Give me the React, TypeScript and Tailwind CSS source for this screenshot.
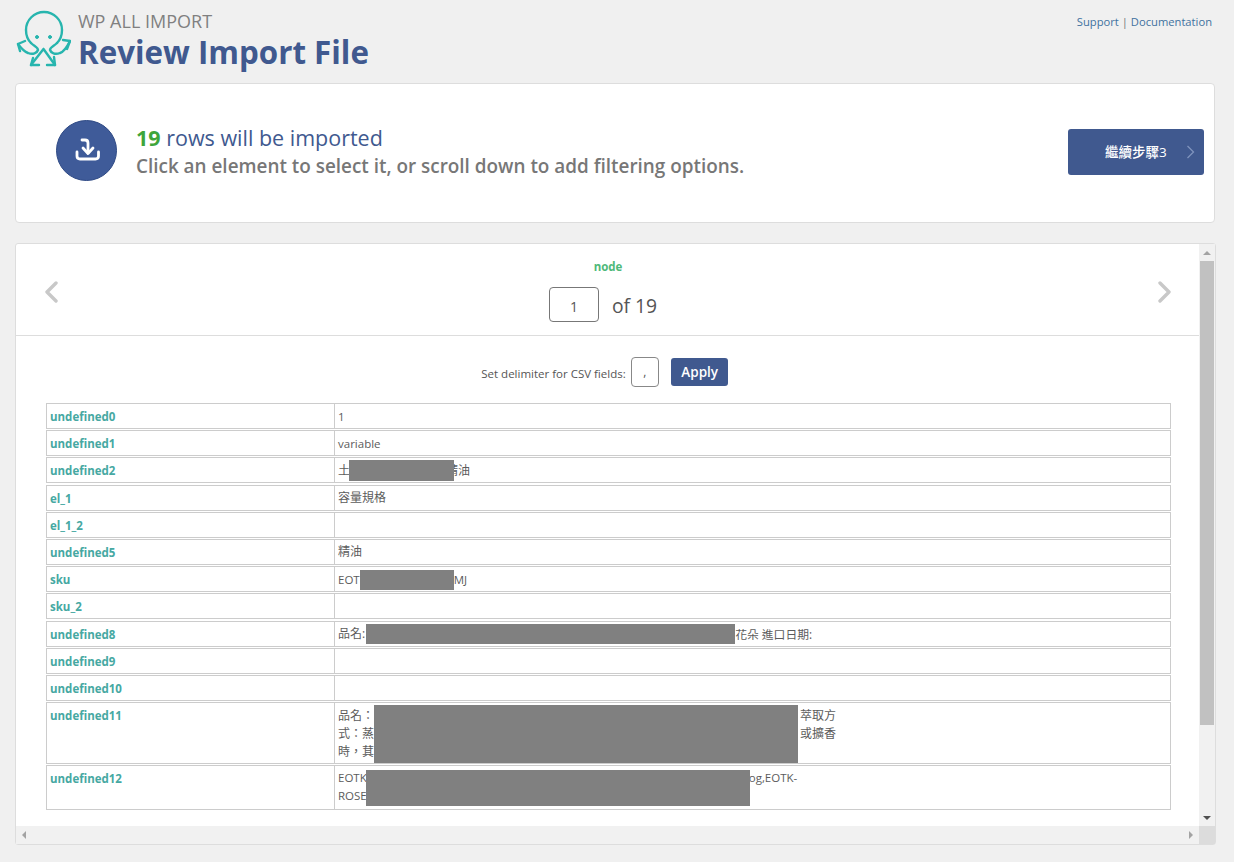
import { type ReactNode } from "react";

const font = "font-['Open_Sans','Noto_Sans_CJK_TC',sans-serif]";

function Logo() {
  return (
    <svg width="56" height="58" viewBox="14 9 56 58" fill="none" stroke="#27b5ae" strokeWidth="2.4" strokeLinecap="round" strokeLinejoin="round" className="shrink-0">
      <path d="M30 42C26 38 25 33 25 29a18 18 0 0 1 36 0c0 4-1 9-5 13" />
      <path d="M30 42c3 3 7 4 7 7c-1 3-5 5-10 3c-3-1-7-5-10-9" />
      <path d="M56 42c-3 3-7 4-7 7c1 3 5 5 10 3c3-1 7-6 10-12" />
      <path d="M24 40l-7 3l2 7M62 39l7 1l-3 8" />
      <path d="M42.500 48L30 64M42.500 48L54 64" />
      <path d="M32 57l-2 7l8 0M53 56l1 8l-8 0" />
      <circle cx="36" cy="36" r="1.500" fill="#27b5ae" strokeWidth="1" />
      <circle cx="49" cy="36" r="1.500" fill="#27b5ae" strokeWidth="1" />
    </svg>
  );
}

function ImportIcon() {
  return (
    <svg width="60" height="60" viewBox="56 120 60 60" fill="none" stroke="white" strokeWidth="2.800" strokeLinecap="round" strokeLinejoin="round" className="shrink-0">
      <path d="M81 140h3c2 0 3 1 3 3v10" />
      <path d="M82 148l5 5.500 5-5.500" />
      <path d="M76 152v4c0 2 1 3 3 3h15.500c2 0 3-1 3-3v-4" />
    </svg>
  );
}

function Chevron({ dir }: { dir: "left" | "right" }) {
  return (
    <svg width="14" height="22" viewBox="0 0 14 22" fill="none" stroke="#c8c8c8" strokeWidth="3.400" strokeLinecap="round" strokeLinejoin="round" className="mt-[5px]">
      <path d={dir === "left" ? "M12 2L3 11l9 9" : "M2 2l9 9-9 9"} />
    </svg>
  );
}

function Redacted({ w, h, className = "" }: { w: number; h: number; className?: string }) {
  return <span className={`relative z-10 block shrink-0 bg-[#808080] ${className}`} style={{ width: w, height: h }} />;
}

function Row({ label, h = "h-[26px]", children }: { label: string; h?: string; children?: ReactNode }) {
  return (
    <div className={`flex ${h} border border-[#ccc] bg-white`}>
      <div className="w-[288px] shrink-0 border-r border-[#ccc] pl-[3px] pt-[4px] text-[11.500px] leading-[17px] font-bold text-[#46a8a2]">
        {label}
      </div>
      <div className="min-w-0 flex-1 pl-[3px] text-[11.500px] leading-[18px] text-[#5c5c5c]">{children}</div>
    </div>
  );
}

function Line({ children }: { children: ReactNode }) {
  return <div className="flex h-full items-center whitespace-nowrap pt-[1px]">{children}</div>;
}

export default function App() {
  return (
    <div className={`${font} h-[862px] w-[1234px] overflow-hidden bg-[#f0f0f0] pt-[10px] pl-[15px] pr-[18px]`}>
      <header className="flex h-[73px] items-start">
        <Logo />
        <div className="ml-[7px]">
          <div className="text-[18px] leading-[22px] text-[#808080]">WP ALL IMPORT</div>
          <h1 className="mt-[1px] text-[31.300px] leading-[38px] font-bold text-[#40598f]">Review Import File</h1>
        </div>
        <div className="ml-auto mt-[3px] mr-[4px] text-[11.200px] leading-[17px] text-[#3f729f]">
          Support <span className="text-[#777]">|</span> Documentation
        </div>
      </header>

      <section className="flex h-[140px] w-[1200px] items-center rounded-[4px] border border-[#ddd] bg-white pr-[10px] pb-[4px] pl-[40px]">
        <div className="-mt-[2px] flex h-[61px] w-[61px] shrink-0 items-center justify-center rounded-full border border-[#2f4a85] bg-[#3f5b99]">
          <ImportIcon />
        </div>
        <div className="ml-[19px]">
          <div className="text-[21.500px] leading-[29px] font-medium text-[#40598f]">
            <span className="font-bold text-[#3ea53a]">19</span> rows will be imported
          </div>
          <div className="mt-[2px] text-[18.900px] leading-[25px] font-semibold text-[#777]">Click an element to select it, or scroll down to add filtering options.</div>
        </div>
        <button className="mt-[2px] ml-auto flex h-[46px] w-[136px] items-center rounded-[3px] bg-[#40598f] pl-[37px] text-[13.500px] font-medium text-white">
          繼續步驟3
          <svg width="9" height="14" viewBox="0 0 9 14" fill="none" stroke="#7f93bd" strokeWidth="1.300" className="ml-[19px]">
            <path d="M1.500 1l6 6-6 6" />
          </svg>
        </button>
      </section>

      <section className="mt-[20px] flex h-[602px] w-[1201px] flex-col rounded-[3px] border border-[#ddd] bg-white">
        <div className="flex min-h-0 flex-1">
          <div className="min-w-0 flex-1">
            <div className="flex h-[92px] items-center justify-between border-b border-[#ddd] pr-[27px] pl-[28px]">
              <Chevron dir="left" />
              <div className="flex flex-col items-center">
                <div className="mt-[2px] text-[11.500px] leading-[16px] font-bold text-[#4fb97a]">node</div>
                <div className="mt-[12px] mr-[10px] flex items-center">
                  <div className="flex h-[35px] w-[50px] items-center justify-center rounded-[4px] border border-[#777] pt-[4px] text-[14px] text-[#555]">1</div>
                  <span className="ml-[13px] pt-[2px] text-[19.300px] leading-[26px] text-[#555]">of 19</span>
                </div>
              </div>
              <Chevron dir="right" />
            </div>

            <div className="mt-[21px] flex h-[30px] items-center justify-center pr-[6px]">
              <span className="pt-[3px] text-[11.500px] text-[#555]">Set delimiter for CSV fields:</span>
              <div className="ml-[5px] flex h-[30px] w-[28px] items-center justify-center rounded-[4px] border border-[#888] text-[12px] text-[#555]">,</div>
              <button className="ml-[12px] h-[28px] w-[57px] rounded-[3px] bg-[#40598f] pl-[1px] text-[13.500px] font-semibold text-white">Apply</button>
            </div>

            <div className="mt-[16px] ml-[30px] flex w-[1125px] flex-col gap-[1.200px]">
              <Row label="undefined0"><Line>1</Line></Row>
              <Row label="undefined1"><Line>variable</Line></Row>
              <Row label="undefined2">
                <Line><span className="text-[12px]">土</span><Redacted w={105} h={21} className="-ml-[1px]" /><span className="-ml-[8px] text-[12px]">精油</span></Line>
              </Row>
              <Row label="el_1"><Line><span className="text-[12px]">容量規格</span></Line></Row>
              <Row label="el_1_2" />
              <Row label="undefined5"><Line><span className="text-[12px]">精油</span></Line></Row>
              <Row label="sku">
                <Line>EOT<Redacted w={94} h={20} /><span>MJ</span></Line>
              </Row>
              <Row label="sku_2" />
              <Row label="undefined8">
                <Line><span className="text-[12px]">品名:</span><Redacted w={369} h={20} className="ml-[1px]" /><span className="text-[11.800px]">花朵 進口日期:</span></Line>
              </Row>
              <Row label="undefined9" />
              <Row label="undefined10" />
              <Row label="undefined11" h="h-[62px]">
                <div className="relative w-[498px] pt-[4px] text-[12px]">
                  <div className="flex justify-between"><span>品名：</span><span>萃取方</span></div>
                  <div className="flex justify-between"><span>式：蒸</span><span>或擴香</span></div>
                  <div>時，萁</div>
                  <span className="absolute top-[2px] left-[36px] h-[58px] w-[424px] bg-[#808080]" />
                </div>
              </Row>
              <Row label="undefined12" h="h-[45px]">
                <div className="relative w-[498px] pt-[3px]">
                  <div>EOTK<span className="ml-[382px]">og,EOTK-</span></div>
                  <div>ROSE</div>
                  <span className="absolute top-[4px] left-[28px] h-[36px] w-[384px] bg-[#808080]" />
                </div>
              </Row>
            </div>
          </div>

          <div className="flex w-[16px] shrink-0 flex-col items-center bg-[#f1f1f1]">
            <div className="flex h-[17px] items-center">
              <div className="h-0 w-0 border-x-[4px] border-b-[4px] border-x-transparent border-b-[#a3a3a3]" />
            </div>
            <div className="h-[464px] w-[14px] bg-[#c1c1c1]" />
            <div className="mt-auto flex h-[17px] items-center">
              <div className="h-0 w-0 border-x-[4px] border-t-[4px] border-x-transparent border-t-[#505050]" />
            </div>
          </div>
        </div>

        <div className="flex h-[18px] shrink-0 bg-[#f1f1f1]">
          <div className="flex flex-1 items-center justify-between px-[6px]">
            <div className="h-0 w-0 border-y-[4px] border-r-[4px] border-y-transparent border-r-[#a3a3a3]" />
            <div className="h-0 w-0 border-y-[4px] border-l-[4px] border-y-transparent border-l-[#a3a3a3]" />
          </div>
          <div className="w-[16px] bg-[#dcdcdc]" />
        </div>
      </section>
    </div>
  );
}
